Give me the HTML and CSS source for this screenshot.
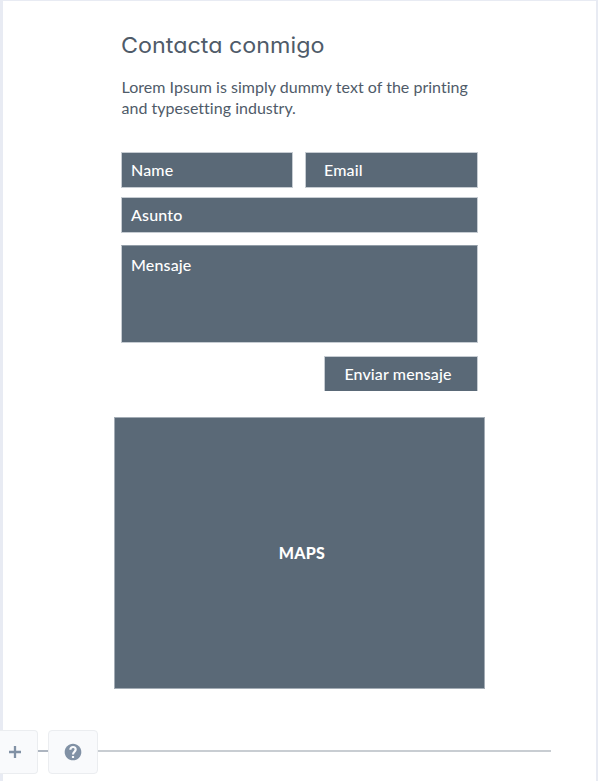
FILE: index.html
```
<!DOCTYPE html>
<html lang="es">
<head>
<meta charset="utf-8">
<title>Contacta conmigo</title>
<link rel="stylesheet" href="styles.css">
</head>
<body>
<main class="page">
  <section class="contact">
    <h1 class="title">Contacta conmigo</h1>
    <p class="intro">Lorem Ipsum is simply dummy text of the printing<br>and typesetting industry.</p>
    <form class="form">
      <div class="row">
        <div class="field">Name</div>
        <div class="field email">Email</div>
      </div>
      <div class="field subject">Asunto</div>
      <div class="field message">Mensaje</div>
      <button class="send" type="button">Enviar mensaje</button>
    </form>
  </section>
  <section class="map"><span>MAPS</span></section>
  <footer class="footer">
    <button class="tool add" type="button" aria-label="+">
      <svg width="14" height="14" viewBox="0 0 14 14"><path d="M7 1v12M1 7h12" stroke="#8191a5" stroke-width="2.3"/></svg>
    </button>
    <span class="line gap"></span>
    <button class="tool help" type="button" aria-label="?">
      <svg width="20" height="20" viewBox="0 0 24 24"><path fill="#8191a5" d="M12 2C6.480 2 2 6.480 2 12s4.480 10 10 10 10-4.480 10-10S17.520 2 12 2z"/><path fill="none" stroke="#f9fafc" stroke-width="2.6" d="M8.800 9.200C8.800 7.300 10.200 6 12 6s3.200 1.300 3.200 3c0 2.500-3.200 2.800-3.200 6M12 16.700v2.600"/></svg>
    </button>
    <span class="line rest"></span>
  </footer>
</main>
</body>
</html>
```
FILE: styles.css
```
* { box-sizing: border-box; }
body {
  margin: 0;
  background: #fff;
  color: #4f5b69;
  font-family: Lato, "Liberation Sans", sans-serif;
  font-size: 16px;
  font-variant-ligatures: none;
}
.page {
  height: 781px;
  border: solid #e8ebf3;
  border-width: 1px 2px 0 3px;
}
.contact { width: 357px; margin-left: 118px; }
.title {
  width: 300px;
  height: 26px;
  margin: 31px 0 0;
  overflow: hidden;
  white-space: nowrap;
  font: 400 22px/27px Inter, Lato, sans-serif;
  font-optical-sizing: none;
  font-feature-settings: "cv11";
  letter-spacing: 0;
  transform: scaleX(1.06);
  transform-origin: left;
}
.intro { margin: 18px 0 0; height: 42px; line-height: 21px; white-space: nowrap; padding-left: 0.5px; letter-spacing: 0.02px; }
.form { margin-top: 34px; }
.row { display: grid; grid-template-columns: 172px 173px; gap: 12px; }
.field, .send, .map {
  background: #5a6977;
  border: 1px solid #c6ccd2;
  color: #fff;
}
.field { height: 36px; padding: 0 9px; line-height: 33px; font-weight: 500; letter-spacing: 0.15px; }
.email { padding-left: 18px; }
.subject { margin-top: 9px; }
.message { height: 98px; margin-top: 12px; line-height: 38px; border-top-color: #929da7; }
.send {
  display: block;
  width: 154px;
  height: 35px;
  margin: 13px 0 0 auto;
  padding: 0 6px 0 0;
  border-bottom: 0;
  font: 500 16px/34px Lato, sans-serif;
  letter-spacing: 0.12px;
}
.map {
  display: flex;
  align-items: center;
  justify-content: center;
  width: 371px;
  height: 272px;
  margin: 26px 0 0 111px;
  border-color: #a3acb5;
  font-weight: 900;
}
.map span { padding: 0 0 2px 5px; letter-spacing: 0.3px; }
.footer { display: flex; align-items: center; margin: 41px 0 0 -3px; }
.tool {
  display: flex;
  align-items: center;
  justify-content: center;
  height: 44px;
  padding: 0;
  background: #f9fafc;
  border: 1px solid #ebedf0;
  border-radius: 4px;
}
.add { width: 38px; padding-right: 7px; border-left: 0; border-radius: 0 4px 4px 0; }
.help { width: 50px; }
.line { height: 2px; margin-top: -2px; }
.gap { width: 10px; background: #adb5c0; }
.rest { width: 453px; background: #c8cdd2; }
```
